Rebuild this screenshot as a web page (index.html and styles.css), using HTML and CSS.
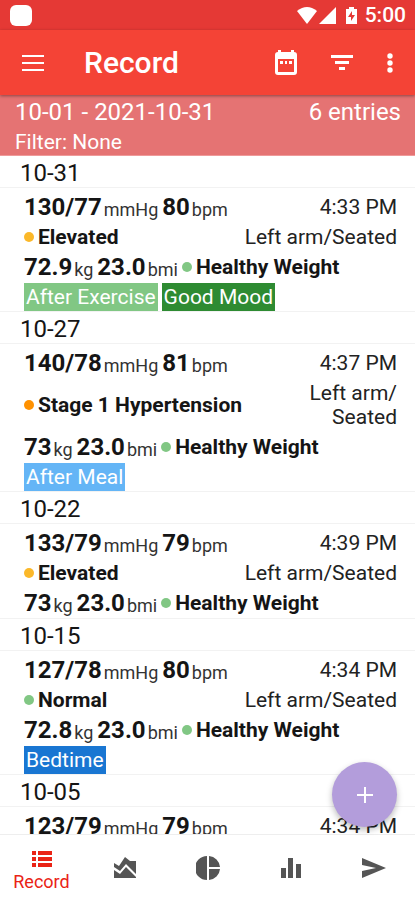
FILE: index.html
```
<!DOCTYPE html>
<html lang="en">
<head>
<meta charset="utf-8">
<meta name="viewport" content="width=device-width, initial-scale=1">
<title>Record</title>
<link rel="stylesheet" href="styles.css">
</head>
<body>
<div class="app">
  <div class="status">
    <span class="status-app"></span>
    <div class="status-icons">
      <svg width="20" height="17" viewBox="0 0 20 17"><path d="M0 4Q10-4 20 4L10 17Z"/></svg>
      <svg width="17" height="17" viewBox="0 0 17 17"><path d="M17 0V17H0Z"/></svg>
      <svg class="battery" width="11" height="17" viewBox="0 0 11 17"><path fill-rule="evenodd" d="M3 0H8V2H11V17H0V2H3ZM6 4L2 10H5V14L9 8H6Z"/></svg>
      <span>5:00</span>
    </div>
  </div>
  <header class="appbar">
    <button class="icon-button" aria-label="Menu"><svg width="24" height="18" viewBox="0 0 24 18"><path d="M1 1H23V3H1ZM1 8H23V10H1ZM1 15H23V17H1Z"/></svg></button>
    <h1>Record</h1>
    <button class="icon-button" aria-label="Calendar"><svg width="22" height="25" viewBox="0 0 22 25"><path fill-rule="evenodd" d="M3 0H6V2H16V0H19V2Q22 2 22 5V22Q22 25 19 25H3Q0 25 0 22V5Q0 2 3 2ZM3 9V22H19V9ZM5 11H8V14H5ZM10 11H12V14H10ZM14 11H17V14H14Z"/></svg></button>
    <button class="icon-button" aria-label="Filter"><svg width="22" height="16" viewBox="0 0 22 16"><path d="M0 0H22V3H0ZM4 6H18V9H4ZM8 12H14V15H8Z"/></svg></button>
    <button class="icon-button more" aria-label="More"><svg width="6" height="20" viewBox="0 0 6 20"><circle cx="3" cy="3" r="2.7"/><circle cx="3" cy="10" r="2.7"/><circle cx="3" cy="17" r="2.7"/></svg></button>
  </header>
  <section class="summary">
    <div class="range"><span>10-01 - 2021-10-31</span><span>6 entries</span></div>
    <div class="filter">Filter: None</div>
  </section>
  <main class="records">
    <h2>10-31</h2>
    <article>
      <div class="row"><div class="values"><b>130/77</b><small>mmHg</small><b>80</b><small>bpm</small></div><time>4:33 PM</time></div>
      <div class="row"><div class="level elevated">Elevated</div><div class="place">Left arm/<wbr>Seated</div></div>
      <div class="row"><div class="values"><b>72.9</b><small>kg</small><b>23.0</b><small>bmi</small></div><div class="level healthy">Healthy Weight</div></div>
      <div class="tags"><span class="tag exercise">After Exercise</span><span class="tag mood">Good Mood</span></div>
    </article>
    <h2>10-27</h2>
    <article>
      <div class="row"><div class="values"><b>140/78</b><small>mmHg</small><b>81</b><small>bpm</small></div><time>4:37 PM</time></div>
      <div class="row"><div class="level stage">Stage 1 Hypertension</div><div class="place">Left arm/<wbr>Seated</div></div>
      <div class="row"><div class="values"><b>73</b><small>kg</small><b>23.0</b><small>bmi</small></div><div class="level healthy">Healthy Weight</div></div>
      <div class="tags"><span class="tag meal">After Meal</span></div>
    </article>
    <h2>10-22</h2>
    <article>
      <div class="row"><div class="values"><b>133/79</b><small>mmHg</small><b>79</b><small>bpm</small></div><time>4:39 PM</time></div>
      <div class="row"><div class="level elevated">Elevated</div><div class="place">Left arm/<wbr>Seated</div></div>
      <div class="row"><div class="values"><b>73</b><small>kg</small><b>23.0</b><small>bmi</small></div><div class="level healthy">Healthy Weight</div></div>
    </article>
    <h2>10-15</h2>
    <article>
      <div class="row"><div class="values"><b>127/78</b><small>mmHg</small><b>80</b><small>bpm</small></div><time>4:34 PM</time></div>
      <div class="row"><div class="level healthy">Normal</div><div class="place">Left arm/<wbr>Seated</div></div>
      <div class="row"><div class="values"><b>72.8</b><small>kg</small><b>23.0</b><small>bmi</small></div><div class="level healthy">Healthy Weight</div></div>
      <div class="tags"><span class="tag bedtime">Bedtime</span></div>
    </article>
    <h2>10-05</h2>
    <article>
      <div class="row"><div class="values"><b>123/79</b><small>mmHg</small><b>79</b><small>bpm</small></div><time>4:34 PM</time></div>
    </article>
  </main>
  <nav class="tabs">
    <button class="add" aria-label="Add record"><svg width="18" height="18" viewBox="0 0 18 18"><path d="M8 1H10V8H17V10H10V17H8V10H1V8H8Z"/></svg></button>
    <a href="#record" class="active"><svg width="20" height="16" viewBox="0 0 20 16"><path d="M0 0H4V4H0ZM6 0H20V4H6ZM0 6H4V10H0ZM6 6H20V10H6ZM0 12H4V16H0ZM6 12H20V16H6Z"/></svg><span>Record</span></a>
    <a href="#trend" aria-label="Trend"><svg width="22" height="21" viewBox="0 0 22 21"><path d="M0 6L5 9L11 0L16 4H22V17L12 7L6 14L0 10Z"/><path d="M0 13L6 17L12 10L22 20V21H0Z"/></svg></a>
    <a href="#share" aria-label="Distribution"><svg width="24" height="24" viewBox="0 0 24 24"><path d="M11 0V24A12 12 0 0 1 11 0ZM13 0A12 12 0 0 1 24 11H13ZM13 13H24A12 12 0 0 1 13 24Z"/></svg></a>
    <a href="#stats" aria-label="Statistics"><svg width="20" height="20" viewBox="0 0 20 20"><path d="M0 10H5V20H0ZM7 0H12V20H7ZM15 6H20V20H15Z"/></svg></a>
    <a href="#send" aria-label="Send"><svg width="24" height="20" viewBox="0 0 24 20"><path d="M0 0L24 10L0 20V13L14 10L0 7Z"/></svg></a>
  </nav>
</div>
</body>
</html>
```
FILE: styles.css
```
* { box-sizing: border-box; }
body { margin: 0; font-family: Roboto, sans-serif; color: #151515; background: #fff; }
.app { display: flex; flex-direction: column; height: 100vh; overflow: hidden; }
svg { display: block; fill: currentColor; }
button { border: 0; padding: 0; background: none; color: inherit; }
h1, h2 { margin: 0; }
.status { flex: none; display: flex; justify-content: space-between; align-items: center; height: 30px; padding: 0 9px 0 10px; background: #e53935; color: #fff; }
.status-app { width: 22px; height: 21px; border-radius: 6px; background: #fff; }
.status-icons { display: flex; align-items: center; gap: 2px; font-size: 21px; font-weight: 500; }
.status-icons .battery { margin: 0 6px 0 8px; }
.appbar { flex: none; display: flex; align-items: center; height: 65px; padding: 0 13px; background: #f44336; color: #fff; position: relative; box-shadow: 0 1px 3px #0006; }
.icon-button { display: grid; place-items: center; width: 40px; height: 40px; }
.icon-button + .icon-button { margin-left: 16px; }
.icon-button.more { width: 24px; }
h1 { flex: 1; padding-left: 31px; font-size: 30px; font-weight: 500; }
.summary { flex: none; padding: 1px 14px 0 15px; height: 61px; background: #e57373; color: #fff; border-bottom: 1px solid #ef9a9a; }
.range { display: flex; justify-content: space-between; font-size: 24px; line-height: 32px; }
.filter { font-size: 21px; line-height: 28px; }
.records { flex: 1; min-height: 0; overflow: hidden; }
h2 { height: 32px; padding-left: 20px; font-size: 24px; line-height: 34px; font-weight: 400; border-bottom: 1px solid #f2f2f2; }
article { padding: 4px 18px 0 24px; border-bottom: 1px solid #f2f2f2; }
.row { display: flex; align-items: center; min-height: 30px; }
.values { display: flex; align-items: flex-end; height: 30px; font-size: 24px; line-height: 30px; }
b { font-weight: 700; }
small { margin: 0 4px 0 2px; font-size: 18px; line-height: 24px; font-weight: 400; color: #333; }
time, .place { margin-left: auto; font-size: 21px; line-height: 24px; text-align: right; color: #222; }
.level { display: flex; align-items: center; gap: 4px; font-size: 21px; line-height: 24px; font-weight: 700; white-space: nowrap; }
.level::before { content: ""; width: 10px; height: 10px; border-radius: 50%; background: #81c784; }
.level.elevated::before { background: #fbb829; }
.level.stage::before { background: #ff9100; }
.row > .place { padding: 3px 0 3px 60px; }
.tags { display: flex; gap: 4px; padding-top: 1px; }
.tag { padding: 0 2px; color: #fff; font-size: 21px; line-height: 28px; }
.exercise { background: #81c784; }
.mood { background: #2e8b32; }
.meal { background: #64b5f6; }
.bedtime { background: #1976d2; }
.tabs { flex: none; position: relative; display: grid; grid-template-columns: repeat(5, 1fr); height: 66px; border-top: 1px solid #eee; background: #fff; color: #555; }
.tabs a { display: flex; flex-direction: column; align-items: center; justify-content: center; gap: 4px; color: inherit; text-decoration: none; font-size: 18px; line-height: 22px; }
.tabs .active { padding-top: 8px; color: #ea2315; }
.add { position: absolute; right: 18px; bottom: 73px; display: grid; place-items: center; width: 65px; height: 65px; border-radius: 50%; background: #b39ddb; color: #fff; box-shadow: 0 3px 6px #0004; }
```
